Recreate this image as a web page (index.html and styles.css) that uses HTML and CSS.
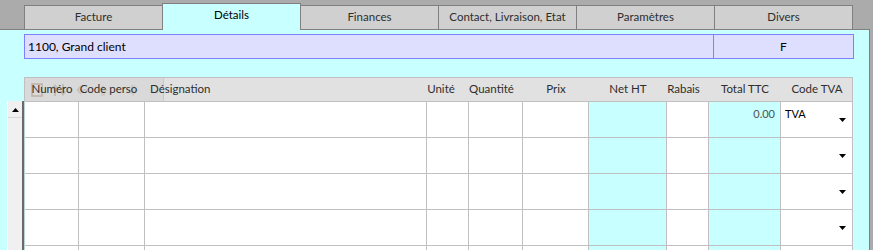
FILE: index.html
```html
<!DOCTYPE html>
<html lang="fr">
<head>
<meta charset="utf-8">
<title>Détails</title>
<link rel="stylesheet" href="styles.css">
</head>
<body>
<div class="tabs">
  <div class="tab">Facture</div>
  <div class="tab active">Détails</div>
  <div class="tab">Finances</div>
  <div class="tab">Contact, Livraison, Etat</div>
  <div class="tab">Paramètres</div>
  <div class="tab">Divers</div>
</div>
<div class="panel">
  <div class="info">
    <div class="info-name">1100, Grand client</div>
    <div class="info-code">F</div>
  </div>
  <div class="table-area">
    <div class="header">
      <div class="ghost">
        <svg class="ghost-icons" width="140" height="23" viewBox="0 0 140 23">
          <rect x="7" y="6" width="10" height="12" fill="none" stroke="#b9a89a" stroke-width="1.5"/>
          <path d="M30 6 l4 5 h-3 v7 h-2 v-7 h-3z M38 18 l4 -5 h-3 v-7 h-2 v7 h-3z" fill="#bfb7ae"/>
          <path d="M52 12 h10 M52 12 l4 -4 M52 12 l4 4" stroke="#c4bcb4" stroke-width="1.5" fill="none"/>
          <path d="M78 7 l5 6 h-3 v5 h-4 v-5 h-3z" fill="#cfc8c0"/>
          <path d="M108 18 l5 -6 h-3 v-5 h-4 v5 h-3z" fill="#cfc8c0"/>
        </svg>
      </div>
      <div class="hc">Numéro</div>
      <div class="hc shift-s">Code perso</div>
      <div class="hc left">Désignation</div>
      <div class="hc shift-l">Unité</div>
      <div class="hc shift-m">Quantité</div>
      <div class="hc">Prix</div>
      <div class="hc">Net HT</div>
      <div class="hc shift-m">Rabais</div>
      <div class="hc">Total TTC</div>
      <div class="hc">Code TVA</div>
    </div>
    <div class="scrollbar">
      <div class="sb-btn">
        <svg width="7" height="4" viewBox="0 0 7 4"><polygon points="0,4 7,4 3.5,0" fill="#000"/></svg>
      </div>
    </div>
    <div class="body">
      <div class="row">
        <div class="c"></div><div class="c"></div><div class="c"></div><div class="c"></div><div class="c"></div><div class="c"></div>
        <div class="c cyan"></div><div class="c"></div><div class="c cyan num">0.00</div>
        <div class="c combo"><span class="combo-text">TVA</span><svg class="arrow" width="7" height="4" viewBox="0 0 7 4"><polygon points="0,0 7,0 3.5,4" fill="#000"/></svg></div>
      </div>
      <div class="row">
        <div class="c"></div><div class="c"></div><div class="c"></div><div class="c"></div><div class="c"></div><div class="c"></div>
        <div class="c cyan"></div><div class="c"></div><div class="c cyan"></div>
        <div class="c combo"><span class="combo-text"></span><svg class="arrow" width="7" height="4" viewBox="0 0 7 4"><polygon points="0,0 7,0 3.5,4" fill="#000"/></svg></div>
      </div>
      <div class="row">
        <div class="c"></div><div class="c"></div><div class="c"></div><div class="c"></div><div class="c"></div><div class="c"></div>
        <div class="c cyan"></div><div class="c"></div><div class="c cyan"></div>
        <div class="c combo"><span class="combo-text"></span><svg class="arrow" width="7" height="4" viewBox="0 0 7 4"><polygon points="0,0 7,0 3.5,4" fill="#000"/></svg></div>
      </div>
      <div class="row">
        <div class="c"></div><div class="c"></div><div class="c"></div><div class="c"></div><div class="c"></div><div class="c"></div>
        <div class="c cyan"></div><div class="c"></div><div class="c cyan"></div>
        <div class="c combo"><span class="combo-text"></span><svg class="arrow" width="7" height="4" viewBox="0 0 7 4"><polygon points="0,0 7,0 3.5,4" fill="#000"/></svg></div>
      </div>
      <div class="row">
        <div class="c"></div><div class="c"></div><div class="c"></div><div class="c"></div><div class="c"></div><div class="c"></div>
        <div class="c cyan"></div><div class="c"></div><div class="c cyan"></div>
        <div class="c combo"><span class="combo-text"></span><svg class="arrow" width="7" height="4" viewBox="0 0 7 4"><polygon points="0,0 7,0 3.5,4" fill="#000"/></svg></div>
      </div>
    </div>
  </div>
</div>
</body>
</html>
```
FILE: styles.css
```css
* { box-sizing: border-box; }
html, body { margin: 0; padding: 0; }
body {
  background: #ababab;
  font-family: "Lato", "Noto Sans", sans-serif;
  font-size: 11px;
  width: 873px;
  height: 250px;
  overflow: hidden;
}

.tabs {
  display: flex;
  align-items: flex-end;
  height: 29px;
  padding-left: 24px;
  position: relative;
  z-index: 2;
}
.tab {
  width: 139px;
  height: 24px;
  margin-left: -1px;
  background: #d0d0d0;
  border: 1px solid #808080;
  border-bottom: none;
  color: #2e2e2e;
  display: flex;
  align-items: center;
  justify-content: center;
  padding-bottom: 2px;
  font-size: 11.5px;
}
.tab:first-child { margin-left: 0; }
.tab.active {
  height: 27px;
  margin-bottom: -1px;
  background: #c8ffff;
  color: #000;
  padding-bottom: 5px;
  position: relative;
  z-index: 3;
}

.panel {
  width: 870px;
  height: 221px;
  background: #c8ffff;
  border-top: 1px solid #808080;
  border-right: 1px solid #808080;
  padding-top: 4px;
  position: relative;
  z-index: 1;
  overflow: hidden;
}

.info {
  margin-left: 24px;
  width: 830px;
  height: 25px;
  background: #dedeff;
  border: 1px solid #8080ff;
  display: flex;
  color: #000;
  font-size: 12px;
}
.info-name {
  width: 689px;
  border-right: 1px solid #8080ff;
  padding-left: 3px;
  display: flex;
  align-items: center;
}
.info-code {
  flex: 1;
  display: flex;
  align-items: center;
  justify-content: center;
}

.table-area {
  margin-top: 18px;
  display: grid;
  grid-template-columns: 7px 17px 829px;
  grid-template-rows: 24px auto;
}
.header {
  grid-column: 3;
  grid-row: 1;
  display: grid;
  grid-template-columns: 54px 66px 282px 42px 54px 66px 78px 42px 72px 72px;
  background: #e1e1e1;
  border-top: 1px solid #c0c0c0;
  border-left: 1px solid #c0c0c0;
  border-right: 1px solid #c0c0c0;
  color: #2e2e2e;
  position: relative;
  font-size: 11.5px;
}
.ghost {
  position: absolute;
  left: 0;
  top: 0;
  width: 139px;
  height: 23px;
  background: rgba(0,0,0,0.035);
  border-right: 1px solid rgba(0,0,0,0.07);
}
.ghost-icons { display: block; opacity: 0.8; }
.hc {
  display: flex;
  align-items: center;
  justify-content: center;
  white-space: nowrap;
  position: relative;
  padding-bottom: 2px;
}
.hc.left { justify-content: flex-start; padding-left: 5px; }
.hc.shift-s { padding-right: 7px; }
.hc.shift-m { padding-right: 9px; }
.hc.shift-l { padding-right: 14px; }

.scrollbar {
  grid-column: 2;
  grid-row: 2;
  background: #f0f0f0;
  border-left: 1px solid #ffffff;
  border-right: 2px solid #6a6a6a;
  padding-top: 1px;
}
.sb-btn {
  height: 16px;
  border-bottom: 1px solid #d8d8d8;
  display: flex;
  align-items: center;
  justify-content: center;
}
.sb-btn svg { display: block; }

.body {
  grid-column: 3;
  grid-row: 2;
  border-top: 1px solid #c0c0c0;
  border-left: 1px solid #b8d4d8;
}
.row {
  display: grid;
  grid-template-columns: 54px 66px 282px 42px 54px 66px 78px 42px 72px 72px;
  height: 36px;
}
.c {
  background: #ffffff;
  border-right: 1px solid #c0c0c0;
  border-bottom: 1px solid #c0c0c0;
}
.c.cyan { background: #c8ffff; }
.c.num {
  text-align: right;
  padding: 5px 5px 0 0;
  color: #505050;
}
.c.combo {
  position: relative;
  padding: 5px 0 0 4px;
  color: #000;
}
.arrow {
  position: absolute;
  right: 6px;
  top: 16px;
  display: block;
}
```
